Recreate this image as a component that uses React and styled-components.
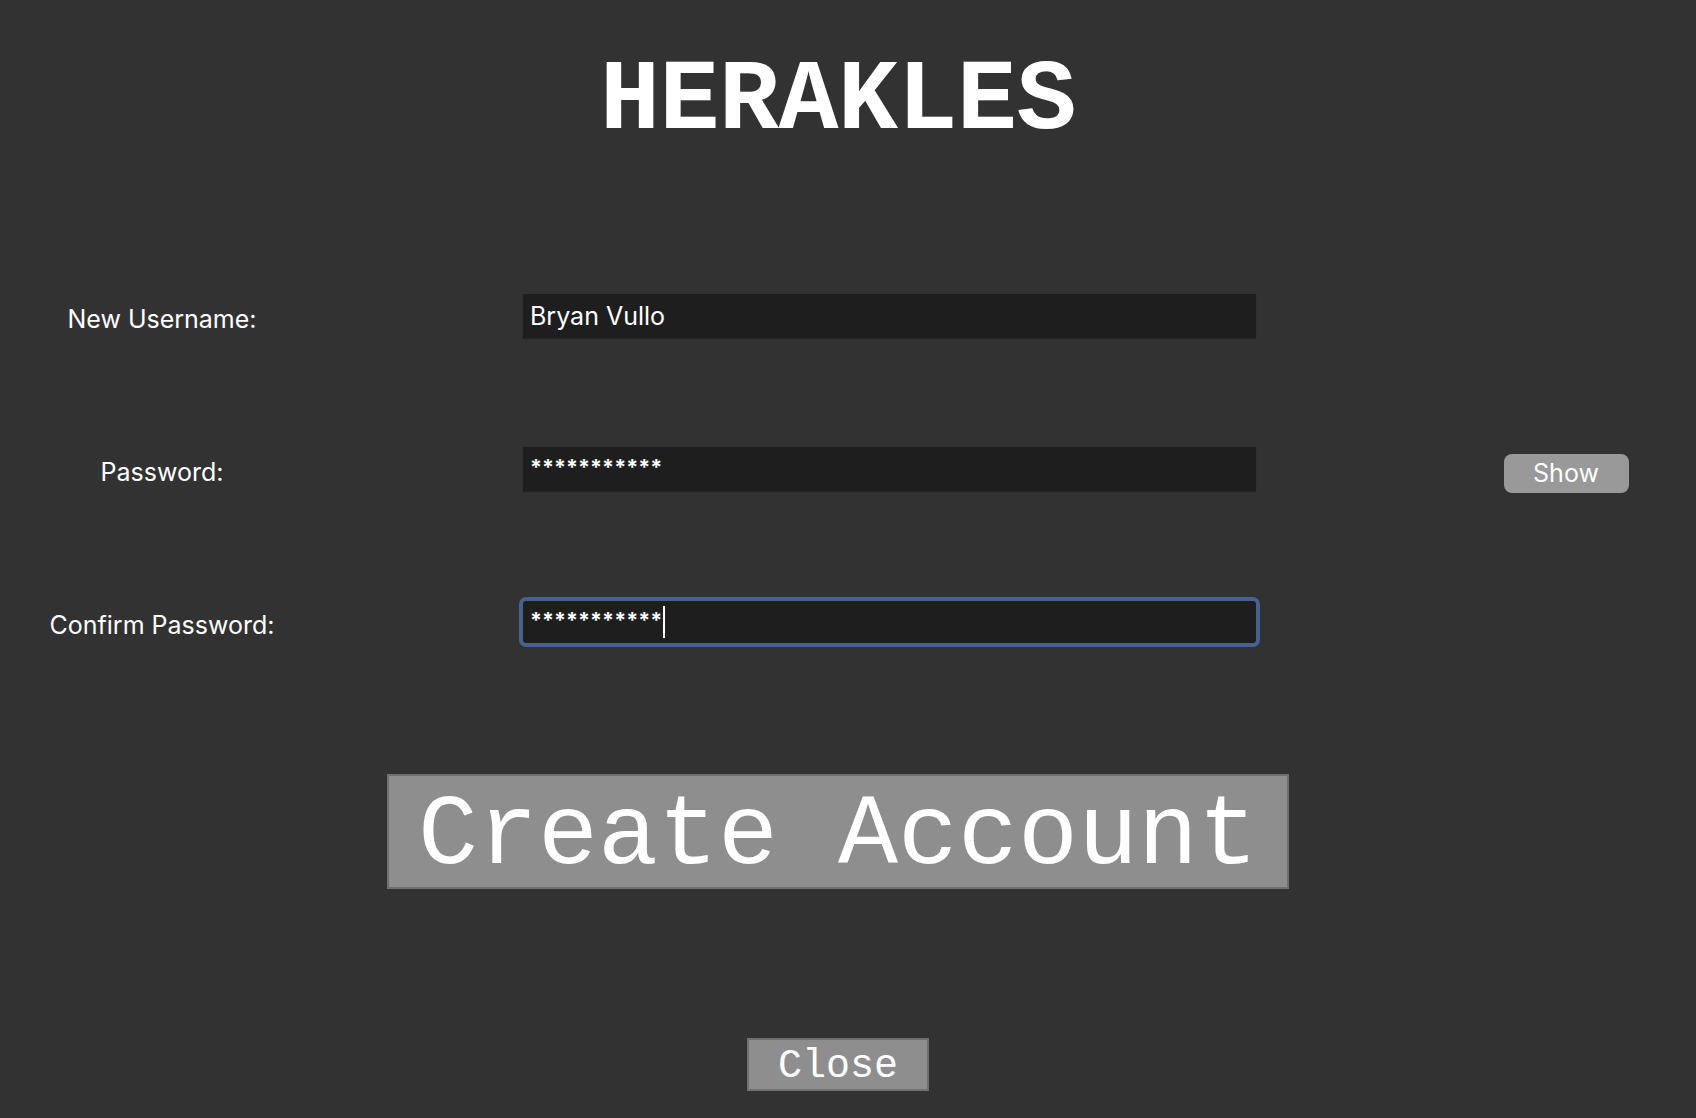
import React from "react";
import styled, { createGlobalStyle } from "styled-components";

const Global = createGlobalStyle`
  html, body { margin: 0; padding: 0; background: #323232; }
  body { font-family: Inter, "Noto Sans", sans-serif; color: #fff; }
`;

const Page = styled.div`
  width: 1676px;
  min-height: 1118px;
  padding-right: 20px;
  display: flex;
  flex-direction: column;
  align-items: center;
`;

const Title = styled.h1`
  margin: 52px 0 0;
  font-family: "Courier New", "Liberation Mono", monospace;
  font-weight: 700;
  font-size: 100px;
  line-height: 100px;
  letter-spacing: -0.5px;
  color: #fff;
`;

const Form = styled.div`
  margin-top: 139px;
  width: 100%;
  display: flex;
  flex-direction: column;
  gap: 103px;
`;

const Row = styled.div`
  display: grid;
  grid-template-columns: 324px 733px 222px;
  column-gap: 199px;
  height: 50px;
  align-items: center;
`;

const Label = styled.label`
  text-align: center;
  font-size: 25px;
  line-height: 30px;
  margin-top: 6px;
  color: #fff;
`;

const Field = styled.div`
  box-sizing: border-box;
  height: ${(p) => (p.$focused ? "42px" : "44px")};
  background: #1e1e1e;
  padding: 0 7px;
  display: flex;
  align-items: center;
  font-size: 25px;
  color: #fff;
  box-shadow: 0 1px 1px rgba(0, 0, 0, 0.25);
  border-radius: ${(p) => (p.$focused ? "3px" : "0")};
  outline: ${(p) => (p.$focused ? "4px solid #46638f" : "none")};
  outline-offset: 0;
`;

const Masked = styled.span`
  font-weight: 700;
  font-size: 21.5px;
  letter-spacing: 0;
  transform: translateY(-2px);
  display: inline-block;
`;

const Caret = styled.span`
  display: inline-block;
  width: 2px;
  height: 32px;
  background: #fff;
  margin-left: 1px;
`;

const ShowButton = styled.button`
  justify-self: center;
  margin-top: 8px;
  width: 125px;
  height: 39px;
  border: none;
  border-radius: 8px;
  background: #999999;
  color: #fff;
  font-family: Inter, "Noto Sans", sans-serif;
  font-size: 25px;
  padding: 0;
`;

const MonoButton = styled.button`
  font-family: "Courier New", "Liberation Mono", monospace;
  color: #fff;
  background: #8e8e8e;
  border: 2px solid #707070;
  padding: ${(p) => p.$shift}px ${(p) => p.$padX}px 0;
  font-size: ${(p) => p.$size}px;
  line-height: ${(p) => p.$lh}px;
  margin-top: ${(p) => p.$mt}px;
  letter-spacing: 0;
`;

export default function App() {
  return (
    <>
      <Global />
      <Page>
        <Title>HERAKLES</Title>
        <Form>
          <Row>
            <Label>New Username:</Label>
            <Field>Bryan Vullo</Field>
            <span />
          </Row>
          <Row>
            <Label>Password:</Label>
            <Field>
              <Masked>***********</Masked>
            </Field>
            <ShowButton>Show</ShowButton>
          </Row>
          <Row>
            <Label>Confirm Password:</Label>
            <Field $focused>
              <Masked>***********</Masked>
              <Caret />
            </Field>
            <span />
          </Row>
        </Form>
        <MonoButton $padX={29} $size={100} $lh={101} $shift={10} $mt={127}>
          Create Account
        </MonoButton>
        <MonoButton $padX={29} $size={40} $lh={45} $shift={4} $mt={149}>
          Close
        </MonoButton>
      </Page>
    </>
  );
}
